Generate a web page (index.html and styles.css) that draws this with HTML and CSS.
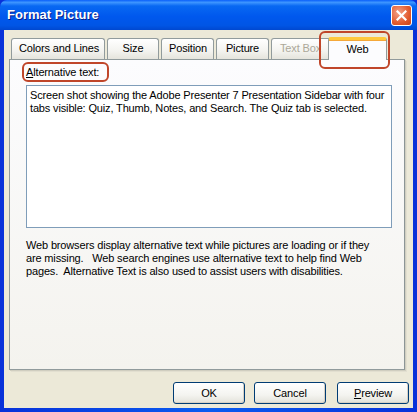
FILE: index.html
```html
<!DOCTYPE html>
<html lang="en">
<head>
    <meta charset="UTF-8">
    <meta name="viewport" content="width=device-width, initial-scale=1.0">
    <title>Format Picture</title>
    <link rel="stylesheet" href="styles.css">
</head>
<body>
    <div class="window">
        <div class="titlebar">
            <span class="title">Format Picture</span>
            <button class="close" aria-label="Close">
                <svg width="11" height="11" viewBox="0 0 11 11">
                    <path d="M1.5 1.5 L9.5 9.5 M9.5 1.5 L1.5 9.5" stroke="#fff" stroke-width="2.2" stroke-linecap="square"/>
                </svg>
            </button>
        </div>
        <div class="client">
            <div class="tabs">
                <div class="tab">Colors and Lines</div>
                <div class="tab">Size</div>
                <div class="tab">Position</div>
                <div class="tab">Picture</div>
                <div class="tab disabled">Text Box</div>
                <div class="tab selected">Web</div>
                <!-- evidenziazione rossa intorno alla scheda Web -->
                <div class="mark mark-tab"></div>
            </div>
            <div class="panel">
                <div class="label-row">
                    <label for="alt-text"><u>A</u>lternative text:</label>
                    <div class="mark mark-label"></div>
                </div>
                <div class="alt-text" id="alt-text">Screen shot showing the Adobe Presenter 7 Presentation Sidebar with four tabs visible: Quiz, Thumb, Notes, and Search. The Quiz tab is selected.</div>
                <p class="help">Web browsers display alternative text while pictures are loading or if they are missing.&nbsp;&nbsp; Web search engines use alternative text to help find Web pages.&nbsp; Alternative Text is also used to assist users with disabilities.</p>
            </div>
            <div class="buttons">
                <button class="btn">OK</button>
                <button class="btn">Cancel</button>
                <button class="btn"><u>P</u>review</button>
            </div>
        </div>
    </div>
</body>
</html>
```

FILE: styles.css
```css
body {
    margin: 0;
    font-family: Tahoma, "Liberation Sans", Arial, sans-serif;
    font-size: 11px;
    letter-spacing: -0.15px;
    color: #000;
}
.window {
    width: 417px;
    height: 412px;
    box-sizing: border-box;
    display: flex;
    flex-direction: column;
    background: linear-gradient(to right, #0831d9, #0a5cf0 50%, #0831d9);
    padding: 0 4px 4px 4px;
}
.titlebar {
    height: 30px;
    margin: 0 -4px;
    padding: 0 5px 0 7px;
    display: flex;
    align-items: center;
    justify-content: space-between;
    background: linear-gradient(to bottom, #0a5ffa 0%, #3d95ff 8%, #0868f2 20%, #0058ee 55%, #0055e5 85%, #0048d0 100%);
    border-radius: 7px 7px 0 0;
}
.title {
    color: #fff;
    font-family: "Trebuchet MS", "Liberation Sans", Arial, sans-serif;
    font-weight: bold;
    font-size: 13px;
    letter-spacing: 0;
    text-shadow: 1px 1px 0 #0a1e8a;
    padding-bottom: 1px;
}
.close {
    width: 21px;
    height: 21px;
    padding: 0;
    border: 1px solid #fff;
    border-radius: 3px;
    background: radial-gradient(circle at 35% 35%, #f3a289, #e25b2f 60%, #cb4216);
    display: flex;
    align-items: center;
    justify-content: center;
}
.client {
    flex: 1;
    background: #ece9d8;
    display: flex;
    flex-direction: column;
    padding: 6px 4px 0 5px;
}
.tabs {
    position: relative;
    display: flex;
    align-items: flex-end;
    height: 23px;
    padding-left: 2px;
    z-index: 1;
}
.tab {
    height: 20px;
    line-height: 19px;
    padding: 0 7px;
    margin-right: 2px;
    border: 1px solid #919b9c;
    border-bottom: none;
    border-radius: 3px 3px 0 0;
    background: linear-gradient(to bottom, #ffffff, #f3f3ef 60%, #e5e4dc);
    text-align: center;
    white-space: nowrap;
}
.tab:nth-child(1) { width: 78px; }
.tab:nth-child(2) { width: 36px; }
.tab:nth-child(3) { width: 37px; }
.tab:nth-child(4) { width: 37px; }
.tab:nth-child(5) {
    width: 43px;
    text-align: left;
    padding-left: 8px;
}
.disabled {
    color: #aca899;
    overflow: hidden;
}
.selected {
    position: relative;
    height: 23px;
    width: 59px;
    margin-left: -5px;
    line-height: 19px;
    background: #fcfcfe;
    border-top: 3px solid #ffc83c;
    box-sizing: border-box;
    box-shadow: inset 0 1px 0 #f5a83a;
    margin-bottom: -1px;
    border-radius: 3px 3px 0 0;
}
.panel {
    height: 311px;
    box-sizing: border-box;
    margin-right: 4px;
    border: 1px solid #919b9c;
    border-right-color: #8c9596;
    box-shadow: 1px 1px 0 #d0cec0, 2px 2px 0 #e2dfd0;
    background: linear-gradient(to bottom, #fcfcfe, #f4f3ee);
    padding: 6px 12px 0 16px;
}
.label-row {
    position: relative;
    height: 19px;
}
.alt-text {
    height: 143px;
    border: 1px solid #7f9db9;
    background: #fff;
    padding: 3px 3px;
    line-height: 13px;
    box-sizing: border-box;
}
.help {
    margin: 11px 0 0 0;
    line-height: 13px;
    padding-right: 6px;
}
.mark {
    position: absolute;
    border: 2px solid #c0462a;
    border-radius: 6px;
    pointer-events: none;
}
.mark-label {
    left: -4px;
    top: -4px;
    width: 83px;
    height: 16px;
}
.mark-tab {
    right: 19px;
    top: -5px;
    width: 67px;
    height: 34px;
    z-index: 2;
}
.buttons {
    display: flex;
    justify-content: flex-end;
    gap: 9px;
    margin-top: 12px;
}
.btn {
    width: 72px;
    height: 22px;
    font-family: inherit;
    font-size: 11px;
    letter-spacing: -0.15px;
    border: 1px solid #003c74;
    border-radius: 3px;
    background: linear-gradient(to bottom, #ffffff, #f4f4f0 60%, #e3e2da);
    box-shadow: inset -1px -1px 0 #d6d0c5;
    padding: 0;
}
.btn:nth-child(3) { margin-left: 2px; }
```
